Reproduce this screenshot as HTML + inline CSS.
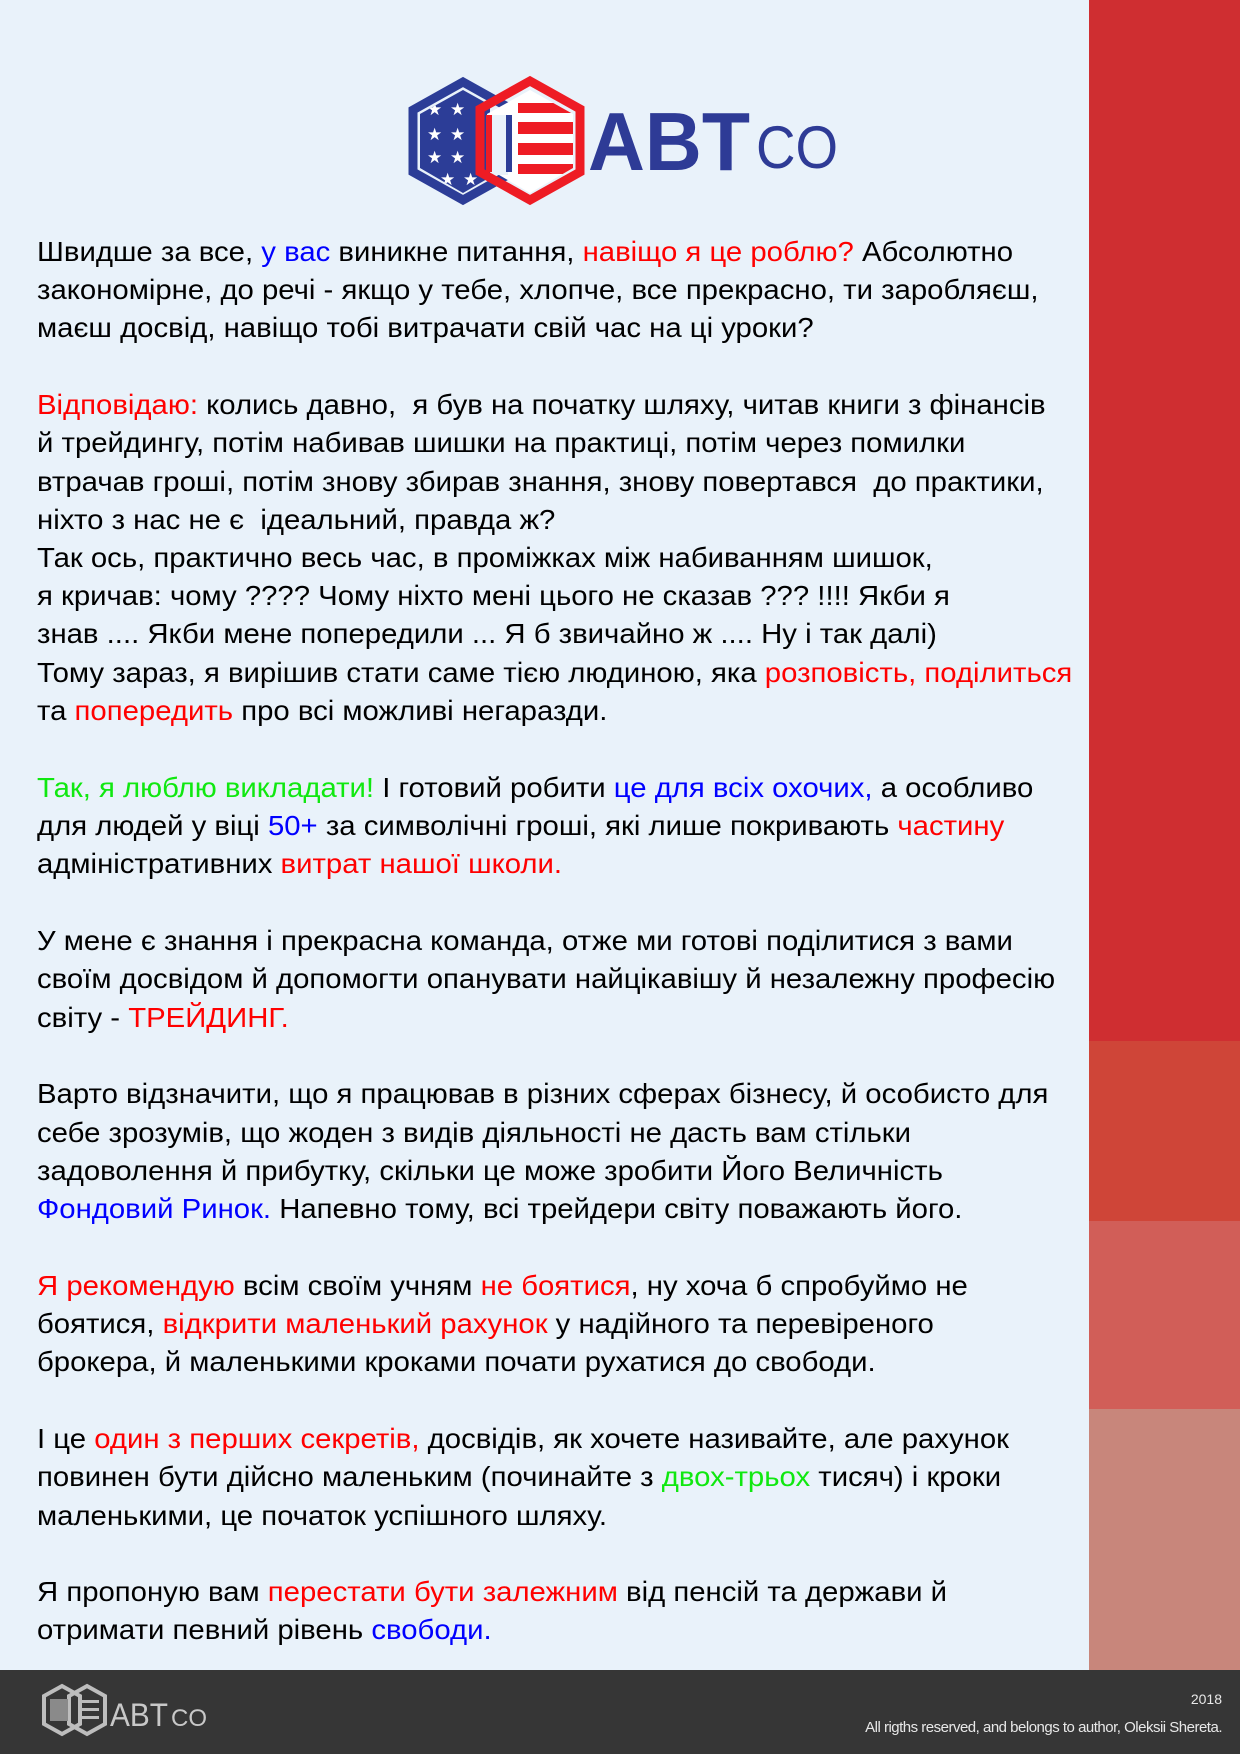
<!DOCTYPE html>
<html><head><meta charset="utf-8">
<style>
html,body{margin:0;padding:0}
body{width:1240px;height:1754px;position:relative;overflow:hidden;background:#e9f2fa;font-family:"Liberation Sans","DejaVu Sans",sans-serif}
.strip{position:absolute;left:1089px;width:151px}
.txt{position:absolute;left:37px;top:0;font-size:28px;color:#000}
.l{position:absolute;left:0;white-space:nowrap;line-height:30px;transform-origin:0 0}
.r{color:#ff0000}.b{color:#0000ff}.g{color:#10e810}
.footer{position:absolute;left:0;top:1670px;width:1240px;height:84px;background:#363636}
.ft{position:absolute;right:18px;color:#e8e8e8;font-size:15px;white-space:nowrap}
</style></head><body>
<div class="strip" style="top:0;height:1041px;background:#cf2e31"></div>
<div class="strip" style="top:1041px;height:180px;background:#cf4538"></div>
<div class="strip" style="top:1221px;height:188px;background:#d15e58"></div>
<div class="strip" style="top:1409px;height:261px;background:#c8867b"></div>

<svg style="position:absolute;left:400px;top:70px" width="460" height="145" viewBox="400 70 460 145">
  <defs><clipPath id="bh"><polygon points="463,90 506,114 506,168 463,193 420,168 420,114"/></clipPath>
  <clipPath id="rh"><polygon points="530,90 573,114 573,168 530,193 487,168 487,114"/></clipPath></defs>
  <g clip-path="url(#bh)"><rect x="410" y="80" width="80" height="130" fill="#2c3d97"/>
   <g fill="#fff" font-size="17" font-family="DejaVu Sans"><text x="427" y="115">★</text><text x="450" y="115">★</text><text x="427" y="140">★</text><text x="450" y="140">★</text><text x="427" y="163">★</text><text x="450" y="163">★</text><text x="440" y="185">★</text><text x="463" y="185">★</text></g></g>
  <polygon points="463,82 513,110 513,172 463,200 413,172 413,110" fill="none" stroke="#2c3d97" stroke-width="9"/>
  <g clip-path="url(#rh)"><rect x="485" y="80" width="95" height="130" fill="#fff"/>
   <rect x="518" y="103" width="60" height="10" fill="#ee1c24"/><rect x="518" y="122" width="60" height="12" fill="#ee1c24"/><rect x="518" y="143" width="60" height="12" fill="#ee1c24"/><rect x="518" y="164" width="60" height="10" fill="#ee1c24"/>
   <rect x="480" y="115" width="28" height="60" fill="#e9f2fa"/></g>
  <polygon points="530,81 580,109 580,172 530,200 480,172 480,109" fill="none" stroke="#ee1c24" stroke-width="9"/>
  <path d="M489 115 L489 172" stroke="#ee1c24" stroke-width="6"/><path d="M509 115 L509 172" stroke="#2c3d97" stroke-width="6"/>
  <text x="588" y="170" font-family="Liberation Sans" font-size="83" font-weight="bold" fill="#2e3b96" textLength="162" lengthAdjust="spacingAndGlyphs">ABT</text>
  <text x="756" y="168" font-family="Liberation Sans" font-size="60" fill="#2e3b96" textLength="82" lengthAdjust="spacingAndGlyphs">CO</text>
</svg>

<div class="txt" id="t">
<div class="l" style="top:237px">Швидше за все, <span class="b">у вас</span> виникне питання, <span class="r">навіщо я це роблю?</span> Абсолютно</div>
<div class="l" style="top:275px">закономірне, до речі - якщо у тебе, хлопче, все прекрасно, ти заробляєш,</div>
<div class="l" style="top:313px">маєш досвід, навіщо тобі витрачати свій час на ці уроки?</div>
<div class="l" style="top:390px"><span class="r">Відповідаю:</span> колись давно,&nbsp; я був на початку шляху, читав книги з фінансів</div>
<div class="l" style="top:428px">й трейдингу, потім набивав шишки на практиці, потім через помилки</div>
<div class="l" style="top:467px">втрачав гроші, потім знову збирав знання, знову повертався&nbsp; до практики,</div>
<div class="l" style="top:505px">ніхто з нас не є&nbsp; ідеальний, правда ж?</div>
<div class="l" style="top:543px">Так ось, практично весь час, в проміжках між набиванням шишок,</div>
<div class="l" style="top:581px">я кричав: чому ???? Чому ніхто мені цього не сказав ??? !!!! Якби я</div>
<div class="l" style="top:619px">знав .... Якби мене попередили ... Я б звичайно ж .... Ну і так далі)</div>
<div class="l" style="top:658px">Тому зараз, я вирішив стати саме тією людиною, яка <span class="r">розповість, поділиться</span></div>
<div class="l" style="top:696px">та <span class="r">попередить</span> про всі можливі негаразди.</div>
<div class="l" style="top:773px"><span class="g">Так, я люблю викладати!</span> І готовий робити <span class="b">це для всіх охочих,</span> а особливо</div>
<div class="l" style="top:811px">для людей у віці <span class="b">50+</span> за символічні гроші, які лише покривають <span class="r">частину</span></div>
<div class="l" style="top:849px">адміністративних <span class="r">витрат нашої школи.</span></div>
<div class="l" style="top:926px">У мене є знання і прекрасна команда, отже ми готові поділитися з вами</div>
<div class="l" style="top:964px">своїм досвідом й допомогти опанувати найцікавішу й незалежну професію</div>
<div class="l" style="top:1003px">світу - <span class="r">ТРЕЙДИНГ.</span></div>
<div class="l" style="top:1079px">Варто відзначити, що я працював в різних сферах бізнесу, й особисто для</div>
<div class="l" style="top:1118px">себе зрозумів, що жоден з видів діяльності не дасть вам стільки</div>
<div class="l" style="top:1156px">задоволення й прибутку, скільки це може зробити Його Величність</div>
<div class="l" style="top:1194px"><span class="b">Фондовий Ринок.</span> Напевно тому, всі трейдери світу поважають його.</div>
<div class="l" style="top:1271px"><span class="r">Я рекомендую</span> всім своїм учням <span class="r">не боятися</span>, ну хоча б спробуймо не</div>
<div class="l" style="top:1309px">боятися, <span class="r">відкрити маленький рахунок</span> у надійного та перевіреного</div>
<div class="l" style="top:1347px">брокера, й маленькими кроками почати рухатися до свободи.</div>
<div class="l" style="top:1424px">І це <span class="r">один з перших секретів,</span> досвідів, як хочете називайте, але рахунок</div>
<div class="l" style="top:1462px">повинен бути дійсно маленьким (починайте з <span class="g">двох-трьох</span> тисяч) і кроки</div>
<div class="l" style="top:1501px">маленькими, це початок успішного шляху.</div>
<div class="l" style="top:1577px">Я пропоную вам <span class="r">перестати бути залежним</span> від пенсій та держави й</div>
<div class="l" style="top:1615px">отримати певний рівень <span class="b">свободи.</span></div>
</div>

<div class="footer">
<svg style="position:absolute;left:40px;top:10px" width="180" height="64" viewBox="0 0 180 64">
 <polygon points="22,6 40,16 40,44 22,54 4,44 4,16" fill="none" stroke="#bdbdbd" stroke-width="4"/>
 <polygon points="47,6 65,16 65,44 47,54 29,44 29,16" fill="none" stroke="#bdbdbd" stroke-width="4"/>
 <rect x="10" y="19" width="18" height="22" fill="#8a8a8a"/>
 <rect x="41" y="20" width="18" height="3" fill="#bdbdbd"/><rect x="41" y="28" width="18" height="3" fill="#bdbdbd"/><rect x="41" y="36" width="18" height="3" fill="#bdbdbd"/>
 <text x="70" y="46" font-family="Liberation Sans" font-size="32" fill="#c8c8c8" textLength="58" lengthAdjust="spacingAndGlyphs">ABT</text>
 <text x="131" y="46" font-family="Liberation Sans" font-size="24" fill="#c8c8c8" textLength="36" lengthAdjust="spacingAndGlyphs">CO</text>
</svg>
<div class="ft" style="top:21px;font-size:14px">2018</div>
<div class="ft" style="top:49px;letter-spacing:-0.5px">All rigths reserved, and belongs to author, Oleksii Shereta.</div>
</div>
<script>
(function(){var ls=document.querySelectorAll('.l');var w=ls[0].getBoundingClientRect().width;var s=976/w;
for(var i=0;i<ls.length;i++){ls[i].style.transform='scaleX('+s+')';}})();
</script>
</body></html>
